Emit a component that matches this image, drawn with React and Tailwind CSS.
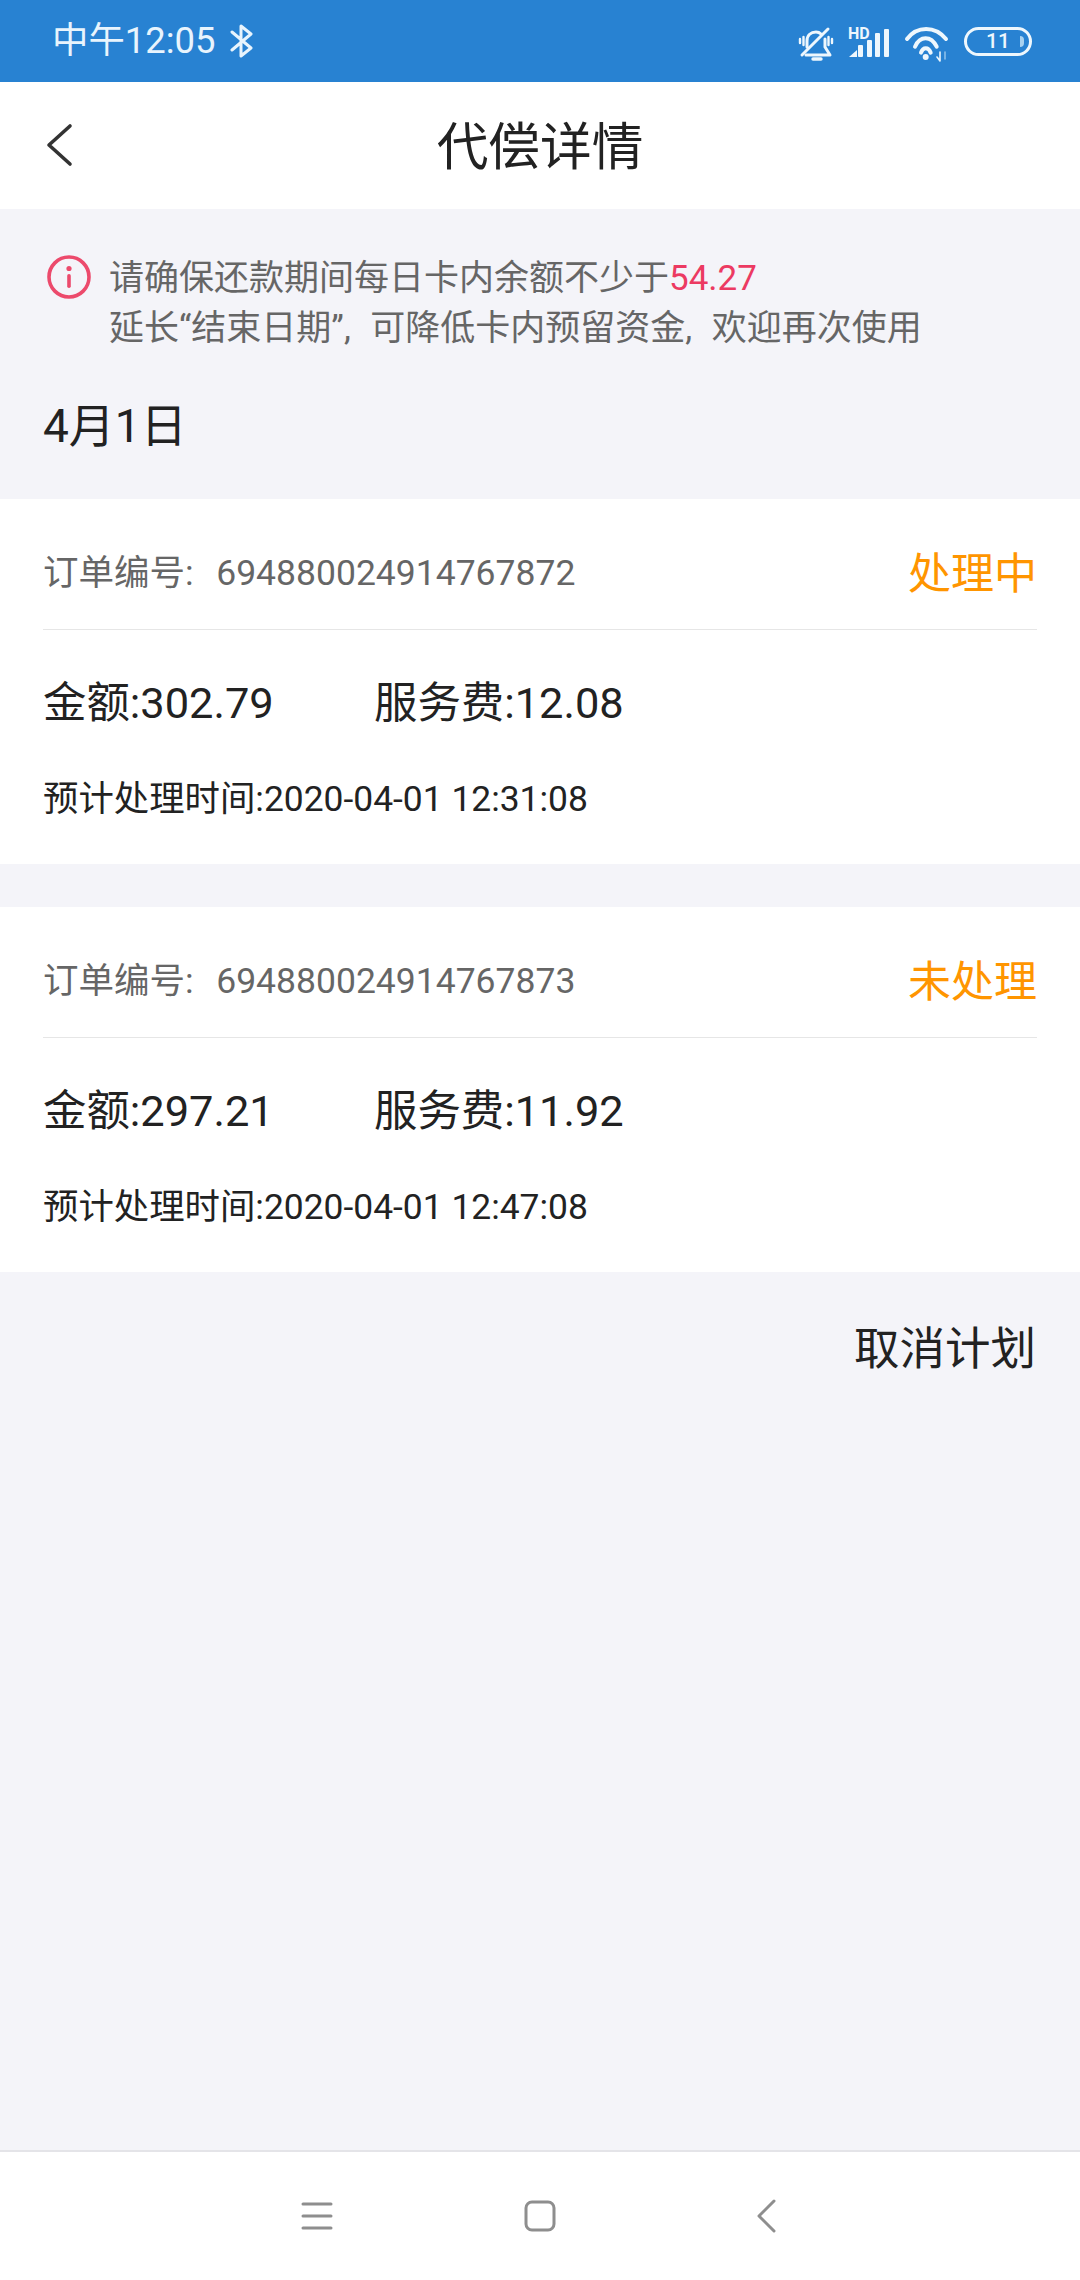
import React from "react";

const font = { fontFamily: 'Roboto, "Noto Sans CJK SC", sans-serif' };

const BluetoothIcon = () => (
  <svg width="24" height="36" viewBox="0 0 24 36" fill="none" stroke="#e8f4fd" strokeWidth="3" strokeLinejoin="round" strokeLinecap="round">
    <path d="M2 9 L21 25 L11 33 V3 L21 11 L2 27" />
  </svg>
);

const MuteIcon = () => (
  <svg className="overflow-visible" width="36" height="36" viewBox="0 0 36 36" fill="none" stroke="#eef7fd" strokeWidth="3" strokeLinecap="round" strokeLinejoin="round">
    <path d="M10 24 V18 C10 12 14 9 19 9 C21 9 23 10 24 11" />
    <path d="M28 16 V24 L33 32 H9" />
    <path d="M16 36 H24" strokeWidth="3.4" />
    <path d="M31 6 L5 32" />
    <path d="M3 16 V20 M6.5 14 V22 M31.5 14 V22 M35 16 V20" strokeWidth="2.4" />
  </svg>
);

const SignalIcon = () => (
  <div className="relative w-[42px] h-[32px]">
    <span className="absolute left-0 top-[2px] text-[16px] font-bold leading-[14px] text-[#eef7fd]" style={font}>HD</span>
    <svg className="absolute left-0 top-0 overflow-visible" width="42" height="32" viewBox="0 0 42 32" fill="#eef7fd">
      <path d="M1 32 L9 25 V32 Z" />
      <rect x="10" y="20" width="5" height="12" rx="1" />
      <rect x="19" y="15" width="5" height="17" rx="1" />
      <rect x="27" y="8" width="5" height="24" rx="1" />
      <rect x="36" y="4" width="5" height="28" rx="1" />
    </svg>
  </div>
);

const WifiIcon = () => (
  <svg className="overflow-visible" width="44" height="38" viewBox="0 0 44 38" fill="none" stroke="#eef7fd" strokeWidth="4" strokeLinecap="round">
    <path d="M2 17 C12 3.7 30 3.7 41 17" />
    <path d="M10 24.7 C15 13.5 26 13.5 31.7 24.7" />
    <path d="M16 30.7 C18 24.8 23.5 24.8 25.7 30.7" />
    <circle cx="20.7" cy="35" r="3" fill="#eef7fd" stroke="none" />
    <path d="M35 30 V39 M32 35 L35 39" strokeWidth="1.6" />
    <path d="M40 30 V37" strokeWidth="1.6" stroke="#8cc0ea" />
  </svg>
);

const Battery = () => (
  <div className="relative w-[68px] h-[29px] rounded-full border-[3px] border-[#eef7fd] flex items-center justify-center">
    <span className="text-[21px] font-medium leading-none text-[#eef7fd]" style={font}>11</span>
    <span className="absolute right-[5px] top-[6px] w-[4px] h-[11px] rounded-r-full bg-[#a9d2f0]" />
  </div>
);

const InfoIcon = () => (
  <svg width="46" height="46" viewBox="0 0 46 46" fill="none">
    <circle cx="23" cy="23" r="20" stroke="#ec4a6c" strokeWidth="3.6" />
    <circle cx="23" cy="14.5" r="2.6" fill="#ec4a6c" />
    <rect x="21.2" y="20" width="3.6" height="14" rx="1.8" fill="#ec4a6c" />
  </svg>
);

const OrderCard = ({ orderNo, status, amount, fee, time }) => (
  <div className="bg-white px-[43px]">
    <div className="h-[131px] pt-[20px] flex items-center justify-between border-b border-[#e6e6e6]">
      <span className="text-[35.5px] text-[#666666]">
        订单编号:&nbsp;&nbsp;<span className="ml-[5px]">{orderNo}</span>
      </span>
      <span className="text-[43px] text-[#ff9500]">{status}</span>
    </div>
    <div className="h-[102px] pt-[46px] flex items-center text-[#222222] text-[43.4px]">
      <span className="w-[331px]">金额:{amount}</span>
      <span>服务费:{fee}</span>
    </div>
    <div className="h-[132px] pt-[41px] text-[35.4px] text-[#222222]">预计处理时间:{time}</div>
  </div>
);

const App = () => {
  return (
    <div className="w-[1080px] h-[2280px] flex flex-col bg-[#f4f4f9] overflow-hidden" style={font}>
      {/* Status bar */}
      <div className="h-[82px] bg-[#2882d2] flex items-center justify-between pl-[52px] pr-[48px] shrink-0">
        <div className="flex items-center gap-[15px] text-[36.4px] text-[#e8f4fd]">
          <span>中午12:05</span>
          <BluetoothIcon />
        </div>
        <div className="flex items-center gap-[15px]">
          <MuteIcon />
          <SignalIcon />
          <WifiIcon />
          <Battery />
        </div>
      </div>

      {/* Title bar */}
      <div className="relative h-[127px] pt-[5px] bg-white flex items-center justify-center shrink-0">
        <svg className="absolute left-[45px] top-[41px]" width="28" height="44" viewBox="0 0 28 44" fill="none" stroke="#333333" strokeWidth="3.6" strokeLinecap="round" strokeLinejoin="round">
          <path d="M25 3 L4 22 L25 41" />
        </svg>
        <span className="text-[51.7px] text-[#222222]">代偿详情</span>
      </div>

      {/* Notice */}
      <div className="h-[290px] shrink-0 px-[46px] pt-[45px]">
        <div className="flex">
          <InfoIcon />
          <div className="ml-[17px] text-[35px] leading-[50px] text-[#666666]">
            <div>请确保还款期间每日卡内余额不少于<span className="text-[#ec3a62]">54.27</span></div>
            <div>延长“结束日期”,<span className="ml-[19.5px]">可降低卡内预留资金,</span><span className="ml-[19.5px]">欢迎再次使用</span></div>
          </div>
        </div>
        <div className="mt-[38px] -ml-[3px] text-[46px] text-[#222222]">4月1日</div>
      </div>

      <OrderCard orderNo="694880024914767872" status="处理中" amount="302.79" fee="12.08" time="2020-04-01 12:31:08" />
      <div className="h-[43px] shrink-0" />
      <OrderCard orderNo="694880024914767873" status="未处理" amount="297.21" fee="11.92" time="2020-04-01 12:47:08" />

      <div className="flex-1 flex justify-end pr-[44px] pt-[44px] text-[45.5px] text-[#222222]">
        <span className="h-fit">取消计划</span>
      </div>

      {/* Navigation bar */}
      <div className="h-[130px] shrink-0 bg-white border-t-2 border-[#e4e4e8] flex items-center pl-[301px]">
        <svg width="32" height="30" viewBox="0 0 32 30" stroke="#8e8e8e" strokeWidth="3" strokeLinecap="round">
          <path d="M2 3 H30 M2 15 H30 M2 27 H30" />
        </svg>
        <svg className="ml-[191px]" width="32" height="32" viewBox="0 0 32 32" fill="none" stroke="#8e8e8e" strokeWidth="3">
          <rect x="2" y="2" width="28" height="28" rx="6" />
        </svg>
        <svg className="ml-[201px]" width="20" height="34" viewBox="0 0 20 34" fill="none" stroke="#8e8e8e" strokeWidth="3" strokeLinecap="round" strokeLinejoin="round">
          <path d="M17 2 L2 17 L17 32" />
        </svg>
      </div>
    </div>
  );
};

export default App;
